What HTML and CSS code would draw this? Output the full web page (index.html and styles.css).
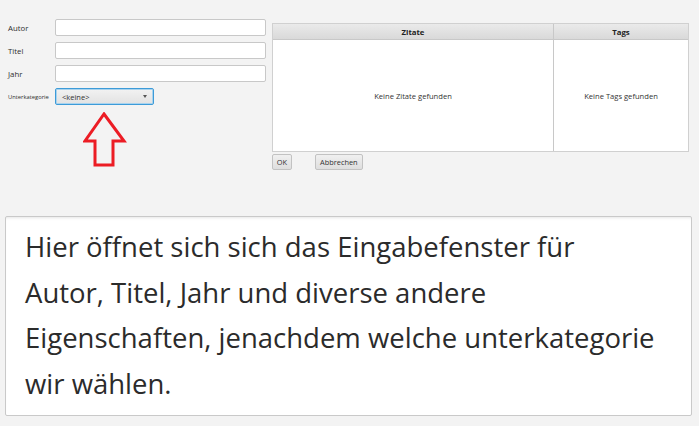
FILE: index.html
```html
<!DOCTYPE html>
<html lang="de">
<head>
<meta charset="utf-8">
<link rel="stylesheet" href="styles.css">
</head>
<body>
<div class="app">
  <div class="dialog">
    <div class="form">
      <div class="row"><span class="lbl">Autor</span><div class="field"></div></div>
      <div class="row"><span class="lbl">Titel</span><div class="field"></div></div>
      <div class="row"><span class="lbl">Jahr</span><div class="field"></div></div>
      <div class="row">
        <span class="lbl small">Unterkategorie</span>
        <div class="combo">
          <span>&lt;keine&gt;</span>
          <span class="caret"></span>
          <svg class="arrow" width="44" height="56" viewBox="0 0 44 56">
            <path d="M21 2 L41 29 L30 29 L30 53 L12 53 L12 29 L2 29 Z" fill="none" stroke="#ec1c24" stroke-width="3" stroke-linejoin="miter"/>
          </svg>
        </div>
      </div>
    </div>
    <div class="right">
      <div class="table">
        <div class="col zitate">
          <div class="th">Zitate</div>
          <div class="td">Keine Zitate gefunden</div>
        </div>
        <div class="col tags">
          <div class="th">Tags</div>
          <div class="td">Keine Tags gefunden</div>
        </div>
      </div>
      <div class="buttons">
        <button class="btn ok">OK</button>
        <button class="btn">Abbrechen</button>
      </div>
    </div>
  </div>
  <div class="note">
    <p>Hier öffnet sich sich das Eingabefenster für<br>Autor, Titel, Jahr und diverse andere<br>Eigenschaften, jenachdem welche unterkategorie<br>wir wählen.</p>
  </div>
</div>
</body>
</html>
```
FILE: styles.css
```css
html, body {
  margin: 0;
  padding: 0;
  background: #f3f3f3;
}
body {
  width: 699px;
  height: 426px;
  overflow: hidden;
  font-family: "Open Sans", "Noto Sans", sans-serif;
}
.app {
  display: flex;
  flex-direction: column;
}
.dialog {
  display: flex;
  height: 216px;
  padding: 19px 0 0 8px;
  box-sizing: border-box;
}
.form {
  display: flex;
  flex-direction: column;
  gap: 6px;
  width: 258px;
}
.row {
  display: flex;
  align-items: center;
  height: 17px;
}
.lbl {
  width: 47px;
  font-size: 7.8px;
  color: #2e2e2e;
}
.lbl.small {
  font-size: 5.8px;
}
.field {
  width: 211px;
  height: 17px;
  box-sizing: border-box;
  background: #fff;
  border: 1px solid #c8c8c8;
  border-radius: 2px;
}
.combo {
  position: relative;
  width: 99px;
  height: 17px;
  box-sizing: border-box;
  border: 1px solid #3d9bd8;
  border-radius: 2px;
  box-shadow: inset 0 0 0 1px #a9d3ee;
  background: linear-gradient(#f2f2f2, #e2e2e2);
  display: flex;
  align-items: center;
  justify-content: space-between;
  padding: 0 6px 0 6px;
  font-size: 7.5px;
  color: #333;
}
.caret {
  width: 0;
  height: 0;
  border-left: 2.5px solid transparent;
  border-right: 2.5px solid transparent;
  border-top: 3px solid #555;
}
.arrow {
  position: absolute;
  left: 27px;
  top: 23px;
}
.right {
  margin-left: 6px;
  margin-top: 4px;
  display: flex;
  flex-direction: column;
}
.table {
  display: flex;
  width: 417px;
  height: 129px;
  box-sizing: border-box;
  border: 1px solid #d0d0d0;
  background: #fff;
}
.col {
  display: flex;
  flex-direction: column;
}
.zitate {
  width: 280px;
  border-right: 1px solid #c8c8c8;
}
.tags {
  flex: 1;
}
.th {
  height: 16px;
  box-sizing: border-box;
  border-bottom: 1px solid #c8c8c8;
  background: linear-gradient(#eaeaea, #d9d9d9);
  font-size: 7.8px;
  font-weight: bold;
  color: #222;
  display: flex;
  align-items: center;
  justify-content: center;
}
.td {
  flex: 1;
  display: flex;
  align-items: center;
  justify-content: center;
  font-size: 7.6px;
  color: #333;
}
.buttons {
  display: flex;
  gap: 23px;
  margin-top: 2px;
}
.btn {
  height: 16px;
  padding: 0 4px;
  box-sizing: border-box;
  border: 1px solid #c2c2c2;
  border-radius: 2px;
  background: linear-gradient(#f0f0f0, #dedede);
  font-family: "Open Sans", "Noto Sans", sans-serif;
  font-size: 7.4px;
  color: #333;
}
.btn.ok {
  width: 20px;
  padding: 0;
}
.note {
  margin-left: 5px;
  width: 687px;
  height: 200px;
  box-sizing: border-box;
  background: #fff;
  border: 1px solid #c9c9c9;
  border-radius: 2px;
  box-shadow: inset 0 3px 3px -2px #e6e6e6;
  padding: 7px 0 0 19px;
}
.note p {
  margin: 0;
  font-size: 27.5px;
  line-height: 45.5px;
  color: #2b2b2b;
  white-space: nowrap;
}
```
